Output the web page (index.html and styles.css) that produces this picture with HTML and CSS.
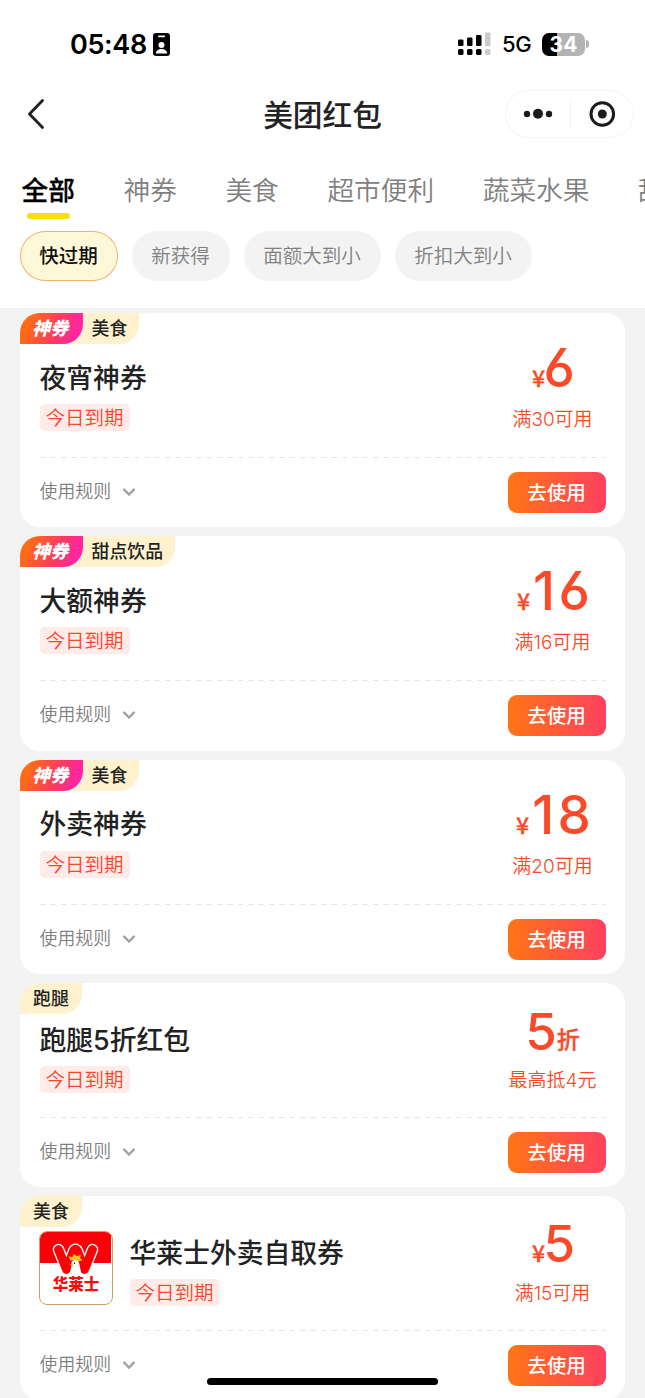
FILE: index.html
```
<!DOCTYPE html>
<html lang="zh-CN">
<head>
<meta charset="utf-8">
<title>美团红包</title>
<link rel="stylesheet" href="styles.css">
</head>
<body>
<svg width="0" height="0" class="defs"><symbol id="down" viewBox="0 0 12 9"><path d="M1.2 1.6 6 6.6 10.8 1.6" fill="none" stroke="#a3a3a3" stroke-width="2.4" stroke-linecap="round"/></symbol></svg>
<div class="screen">
  <header class="top">
    <div class="status">
      <div class="clock"><span>05:48</span>
        <svg width="17" height="23" viewBox="0 0 17 23"><rect width="17" height="23" rx="3.2"/><rect x="5" y="2.6" width="7" height="1.7" rx=".8" fill="#fff"/><circle cx="8.5" cy="12" r="3" fill="#fff"/><path d="M2.800 20.500C3 17.600 5.500 16 8.500 16s5.500 1.600 5.700 4.500z" fill="#fff"/></svg>
      </div>
      <div class="signals">
        <svg width="34" height="24" viewBox="0 0 34 24"><g><rect x="0" y="7.500" width="5.500" height="6.500" rx="1.300"/><rect x="9" y="5.500" width="5.500" height="8.500" rx="1.300"/><rect x="18" y="3" width="5.500" height="11" rx="1.300"/><rect x="0" y="17" width="5.500" height="6" rx="1.500"/><rect x="9" y="17" width="5.500" height="6" rx="1.500"/><rect x="18" y="17" width="5.500" height="6" rx="1.500"/></g><g fill="#cbcbcb"><rect x="27" y=".5" width="5.500" height="13.500" rx="1.300"/><rect x="27" y="17" width="5.500" height="6" rx="1.500"/></g></svg>
        <span class="net">5G</span>
        <span class="battery">34</span><i class="nub"></i>
      </div>
    </div>
    <div class="nav">
      <svg class="back" width="18" height="32" viewBox="0 0 18 32"><path d="M15.500 2.500 2.500 16l13 13.500" fill="none" stroke="#222" stroke-width="2.900" stroke-linecap="round" stroke-linejoin="round"/></svg>
      <h1>美团红包</h1>
      <div class="capsule">
        <svg width="129" height="48" viewBox="0 0 129 48"><g fill="#1b1b1b"><circle cx="22" cy="24" r="3.200"/><circle cx="33" cy="23.700" r="5"/><circle cx="44" cy="24" r="3.200"/><circle cx="97.300" cy="24" r="4.500"/></g><circle cx="97.300" cy="24" r="11.300" fill="none" stroke="#1b1b1b" stroke-width="3"/><path d="M65.500 9v29" stroke="#f2f2f2"/></svg>
      </div>
    </div>
    <nav class="tabs"><a class="on">全部</a><a>神券</a><a>美食</a><a>超市便利</a><a>蔬菜水果</a><a>甜</a></nav>
    <div class="chips"><a class="on">快过期</a><a>新获得</a><a>面额大到小</a><a>折扣大到小</a></div>
  </header>

  <main class="list">
    <article class="card">
      <div class="ribbon"><span class="magic">神券</span><span class="cat">美食</span></div>
      <div class="body"><div class="info"><h2>夜宵神券</h2><span class="due">今日到期</span></div>
        <div class="value"><div class="price"><small>¥</small><b>6</b></div><p>满30可用</p></div></div>
      <div class="foot"><span class="rule">使用规则<svg><use href="#down"/></svg></span><a class="btn">去使用</a></div>
    </article>
    <article class="card">
      <div class="ribbon"><span class="magic">神券</span><span class="cat">甜点饮品</span></div>
      <div class="body"><div class="info"><h2>大额神券</h2><span class="due">今日到期</span></div>
        <div class="value"><div class="price teens"><small>¥</small><b>16</b></div><p>满16可用</p></div></div>
      <div class="foot"><span class="rule">使用规则<svg><use href="#down"/></svg></span><a class="btn">去使用</a></div>
    </article>
    <article class="card">
      <div class="ribbon"><span class="magic">神券</span><span class="cat">美食</span></div>
      <div class="body"><div class="info"><h2>外卖神券</h2><span class="due">今日到期</span></div>
        <div class="value"><div class="price teens"><small>¥</small><b>18</b></div><p>满20可用</p></div></div>
      <div class="foot"><span class="rule">使用规则<svg><use href="#down"/></svg></span><a class="btn">去使用</a></div>
    </article>
    <article class="card compact">
      <div class="ribbon"><span class="cat">跑腿</span></div>
      <div class="body"><div class="info"><h2>跑腿5折红包</h2><span class="due">今日到期</span></div>
        <div class="value"><div class="price discount"><b>5</b><small>折</small></div><p>最高抵4元</p></div></div>
      <div class="foot"><span class="rule">使用规则<svg><use href="#down"/></svg></span><a class="btn">去使用</a></div>
    </article>
    <article class="card compact">
      <div class="ribbon"><span class="cat">美食</span></div>
      <div class="body">
        <div class="logo">
          <svg class="mark" width="71" height="71" viewBox="0 0 71 71"><path d="M0 0h71v31H0z" fill="#fb0007"/><g fill="none" stroke-linecap="round" stroke-linejoin="round"><path d="M18.500 17.500 26.500 37.500 33.500 19Q35.500 15.500 37.500 19L44.500 37.500 52.500 17.500" stroke="#fff" stroke-width="11.500"/><path d="M18.500 17.500 26.500 37.500 33.500 19Q35.500 15.500 37.500 19L44.500 37.500 52.500 17.500" stroke="#fb0007" stroke-width="8.800"/></g><path d="M29 42.500c2-5 2.500-8 2.500-12 0-3 6-3.500 7.500 0 1 5 2 8 2 12-3.500-2-8.500-2-12 0z" fill="#fff"/><path d="m30.500 28.500-2-4 4 .5 1-3 3.500 2 4-1-1 3 2.500 2-4 1.500-3.500-1.500z" fill="#ffc423"/><path d="m32.500 31.500-3 1.200 3 1z" fill="#f90"/><circle cx="34.500" cy="31.200" r=".7"/></svg>
          <span>华莱士</span>
        </div>
        <div class="info"><h2>华莱士外卖自取券</h2><span class="due">今日到期</span></div>
        <div class="value"><div class="price"><small>¥</small><b>5</b></div><p>满15可用</p></div></div>
      <div class="foot"><span class="rule">使用规则<svg><use href="#down"/></svg></span><a class="btn">去使用</a></div>
    </article>
  </main>
  <div class="home"></div>
</div>
</body>
</html>
```
FILE: styles.css
```
* { box-sizing: border-box; }
body { margin: 0; font-family: Inter, "Noto Sans CJK SC", sans-serif; }
h1, h2, p { margin: 0; }
.defs { position: absolute; }
.screen { position: relative; width: 645px; height: 1398px; overflow: hidden; background: #f3f3f3; }
.top { height: 308px; background: #fff; overflow: hidden; }

.status { display: flex; justify-content: space-between; height: 88px; padding: 0 56px 0 70px; align-items: center; }
.clock { display: flex; align-items: center; gap: 6px; font-size: 27px; font-weight: 580; line-height: 32px; letter-spacing: -.35px; padding-top: 1px; }
.signals { display: flex; align-items: center; }
.net { margin-left: 10px; width: 30px; font-size: 22px; font-weight: 450; letter-spacing: -.4px; white-space: nowrap; }
.battery { margin-left: 10px; width: 43px; height: 23px; border-radius: 7px; background: linear-gradient(90deg, #000 34%, #b3b3b3 34%); color: #fff; font-size: 21px; font-weight: 700; line-height: 23px; text-align: center; }
.nub { width: 3px; height: 8px; margin-left: 1px; border-radius: 0 4px 4px 0; background: #b3b3b3; }

.nav { display: grid; grid-template-columns: 129px 1fr 129px; align-items: center; height: 52px; padding: 0 11px; }
.back { margin-left: 16px; }
.nav h1 { padding-top: 2px; font-size: 29.700px; font-weight: 500; line-height: 48px; text-align: center; color: #222; }
.capsule { width: 129px; height: 48px; border-radius: 24px; box-shadow: inset 0 0 0 1px #f5f5f5; }
.capsule svg { display: block; }

.tabs { display: flex; gap: 48.600px; height: 91px; padding: 30px 0 0 21.500px; font-size: 26.700px; line-height: 40px; color: #808080; white-space: nowrap; }
.tabs a { flex: none; font-weight: 350; }
.tabs .on { color: #000; font-weight: 500; -webkit-text-stroke: .3px #000; }
.tabs .on::after { content: ""; display: block; width: 43px; height: 6px; margin: 3px auto 0; border-radius: 3px; background: #fbde0b; }
.chips { display: flex; gap: 14px; padding-left: 20px; }
.chips a { height: 50px; padding: 0 20.200px 0 19.200px; border-radius: 25px; background: #f3f3f3; color: #808080; font-size: 19.550px; line-height: 51px; font-weight: 350; }
.chips .on { background: #fef8d9; color: #111; font-weight: 500; box-shadow: inset 0 0 0 1px #f2b36f; }

.list { display: flex; flex-direction: column; gap: 9.200px; padding: 5px 20px 0; }
.card { flex: none; height: 214.300px; border-radius: 20px; background: #fff; overflow: hidden; }
.ribbon { display: flex; width: max-content; height: 31px; border-radius: 0 0 20px 0; background: #fdf2cd; line-height: 32px; }
.magic { width: 62.500px; padding-right: 2px; border-radius: 0 0 20px 0; background: linear-gradient(110deg, #ff6c16 15%, #ff3765 60%, #ff23ac 90%); color: #fff; font-size: 18px; font-weight: 900; font-style: italic; text-align: center; }
.cat { padding: 0 12px 0 9px; font-size: 17.900px; font-weight: 500; color: #222; }
.compact .cat { padding: 0 13px; }
.body { display: flex; margin: 0 19.500px; height: 114px; background: repeating-linear-gradient(90deg, #e6e6e6 0 5.700px, transparent 5.700px 10.400px) 0 100% / 100% 1.300px no-repeat; }
.info { flex: 1; display: flex; flex-direction: column; align-items: flex-start; padding-top: 13.500px; }
.info h2 { font-size: 26.800px; line-height: 40px; font-weight: 500; color: #222; white-space: nowrap; }
.due { margin-top: 6.500px; height: 27px; padding: 0 6px; border-radius: 5px; background: #ffebe8; color: #f5482b; font-size: 19.500px; line-height: 28px; font-weight: 350; }
.value { width: 106px; display: flex; flex-direction: column; align-items: center; color: #fb4a2a; }
.price { display: flex; align-items: baseline; height: 62px; white-space: nowrap; }
.price b { font: 500 53px/49px Inter, sans-serif; font-feature-settings: "cv03", "cv04"; margin: 0 -2px 0 -1.500px; }
.price small { font-family: "Noto Sans CJK SC", sans-serif; font-size: 23px; line-height: 30px; font-weight: 500; -webkit-text-stroke: .3px #fb4a2a; }
.teens b { letter-spacing: 3.500px; margin: 0 -5.500px 0 3px; }
.value p { font-size: 19px; line-height: 28px; font-weight: 350; white-space: nowrap; }
.foot { display: flex; justify-content: space-between; align-items: flex-start; padding: 13.700px 19.500px 0; }
.rule { display: flex; align-items: center; gap: 12px; line-height: 40px; font-size: 17.900px; font-weight: 350; color: #808080; }
.rule svg { width: 12px; height: 9px; margin-top: 1px; }
.btn { width: 98px; height: 41px; border-radius: 9px; background: linear-gradient(90deg, #ff7513, #ff4060); color: #fff; font-size: 19.500px; line-height: 42px; font-weight: 500; text-align: center; }

.compact { height: 203.800px; }
.compact .body { height: 103.500px; }
.compact .info { padding-top: 6px; }
.compact .due { margin-top: 6px; }
.compact .price { height: 53px; }
.compact .price b { font-size: 51px; line-height: 34px; }
.compact .discount b { margin: 0; line-height: 36px; }
.discount small { transform: translateY(-2px); }

.logo { position: relative; width: 74px; height: 74px; margin: 3.500px 16.500px 0 -.5px; border: 1.500px solid #c9a06a; border-radius: 8px; overflow: hidden; }
.mark { display: block; }
.logo span { position: absolute; left: 0; right: 0; bottom: 8px; text-align: center; font-size: 15.500px; line-height: 22px; font-weight: 900; color: #f2100f; white-space: nowrap; }
.home { position: absolute; left: 207px; top: 1378px; width: 231px; height: 7px; border-radius: 4px; background: #000; }
```
